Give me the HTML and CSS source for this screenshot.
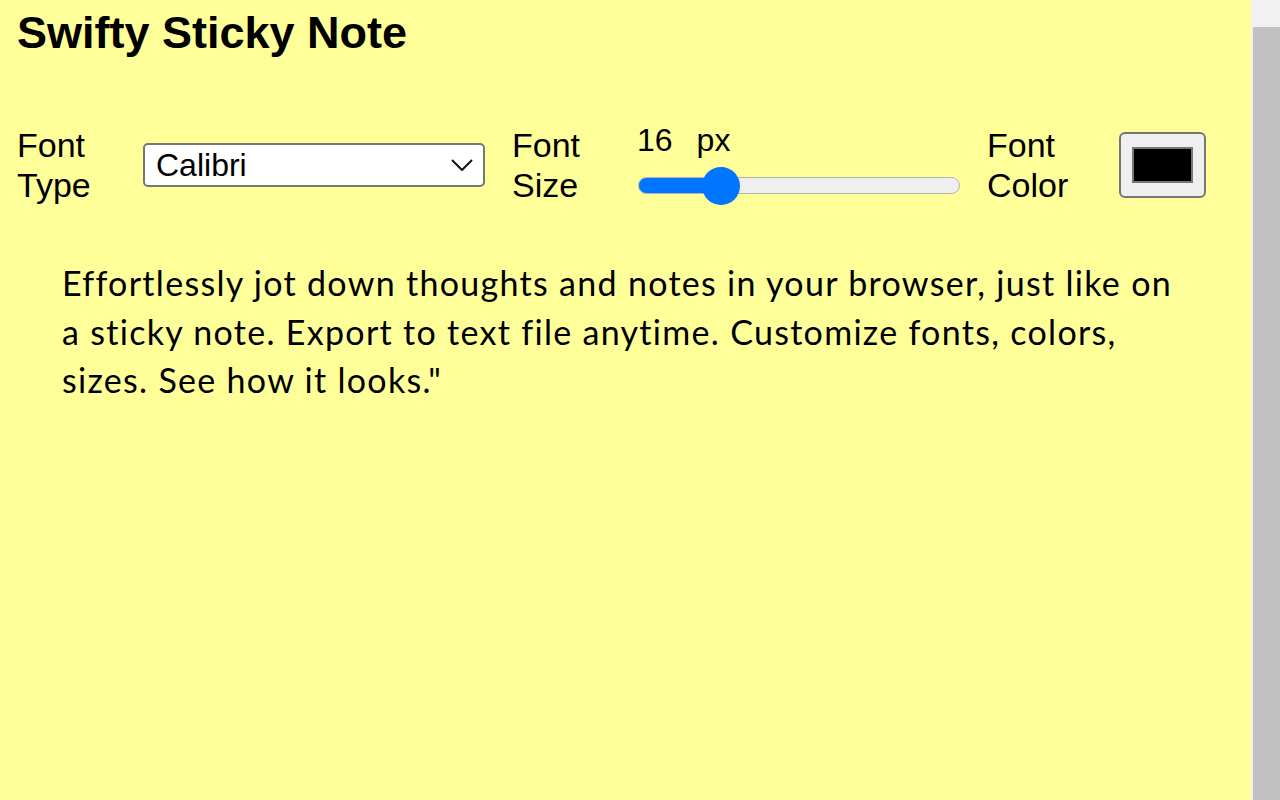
FILE: index.html
```html
<!DOCTYPE html>
<html lang="en">
<head>
<meta charset="utf-8">
<title>Swifty Sticky Note</title>
<link rel="stylesheet" href="styles.css">
</head>
<body>
<div class="app">
  <main class="note">
    <h1 class="title">Swifty Sticky Note</h1>
    <div class="controls">
      <label class="label label-type" for="fontType">Font<br>Type</label>
      <div class="select-wrap">
        <select id="fontType" class="select">
          <option>Calibri</option>
          <option>Arial</option>
          <option>Verdana</option>
        </select>
        <svg class="chevron" width="22" height="12" viewBox="0 0 22 12" aria-hidden="true"><path d="M1 1 L11 11 L21 1" fill="none" stroke="#111" stroke-width="2"/></svg>
      </div>
      <label class="label label-size" for="fontSize">Font<br>Size</label>
      <div class="size-block">
        <div class="size-value"><span class="num">16</span>px</div>
        <input id="fontSize" class="range" type="range" min="8" max="44" value="16" style="--fill: 25.5%">
      </div>
      <label class="label label-color" for="fontColor">Font<br>Color</label>
      <input id="fontColor" class="color" type="color" value="#000000">
    </div>
    <p class="text">Effortlessly jot down thoughts and notes in your browser, just like on a sticky note. Export to text file anytime. Customize fonts, colors, sizes. See how it looks."</p>
  </main>
  <div class="scrollbar"><div class="thumb"></div></div>
</div>
</body>
</html>
```
FILE: styles.css
```css
html, body {
  margin: 0;
  padding: 0;
  height: 100%;
  overflow: hidden;
}
body {
  font-family: "Liberation Sans", Arial, sans-serif;
  color: #000;
  background: #ffff99;
}
.app {
  display: grid;
  grid-template-columns: 1fr 29px;
  height: 100vh;
}
.note {
  background: #ffff99;
  padding: 0 17px;
}
.title {
  margin: 8px 0 0;
  font-size: 45px;
  line-height: 50px;
  font-weight: bold;
}
.controls {
  display: flex;
  align-items: center;
  margin-top: 62px;
}
.label {
  font-size: 34px;
  line-height: 40px;
}
.label-type { width: 126px; }
.label-size { width: 123px; margin-left: 27px; }
.label-color { width: 132px; margin-left: 27px; }
.select-wrap {
  position: relative;
  width: 342px;
  height: 44px;
}
.select {
  -webkit-appearance: none;
  appearance: none;
  box-sizing: border-box;
  width: 100%;
  height: 100%;
  border: 2px solid #767676;
  border-radius: 5px;
  background: #fff;
  padding: 0 40px 0 11px;
  font-family: "Liberation Sans", Arial, sans-serif;
  font-size: 32px;
  color: #000;
  outline: none;
}
.chevron {
  position: absolute;
  right: 12px;
  top: 16px;
  pointer-events: none;
}
.size-block {
  display: flex;
  flex-direction: column;
  width: 325px;
}
.size-value {
  font-size: 32px;
  line-height: 40px;
  padding-left: 2px;
}
.num { margin-right: 24px; }
.range {
  -webkit-appearance: none;
  appearance: none;
  width: 322px;
  height: 50px;
  margin: 0 0 0 3px;
  background: transparent;
}
.range::-webkit-slider-runnable-track {
  height: 17px;
  border: 1px solid #b2b2b2;
  border-radius: 10px;
  background: linear-gradient(to right, #0075ff 0, #0075ff var(--fill), #efefef var(--fill), #efefef 100%);
}
.range::-webkit-slider-thumb {
  -webkit-appearance: none;
  width: 38px;
  height: 38px;
  border-radius: 50%;
  background: #0075ff;
  margin-top: -11px;
  border: none;
}
.color {
  -webkit-appearance: none;
  appearance: none;
  box-sizing: border-box;
  width: 87px;
  height: 66px;
  border: 2px solid #767676;
  border-radius: 6px;
  background: #efefef;
  padding: 13px 11px;
  margin: 0;
}
.color::-webkit-color-swatch-wrapper { padding: 0; }
.color::-webkit-color-swatch {
  border: 2px solid #777;
  border-radius: 0;
}
.text {
  margin: 49px 0 0;
  padding: 0 44px 0 45px;
  font-family: Lato, "Open Sans", sans-serif;
  font-size: 34px;
  letter-spacing: 1.3px;
  line-height: 48.5px;
}
.scrollbar {
  background: #f1f1f1;
  display: flex;
  flex-direction: column;
}
.thumb {
  flex: 1;
  margin: 27px 0 0 2px;
  background: #c1c1c1;
}
```
